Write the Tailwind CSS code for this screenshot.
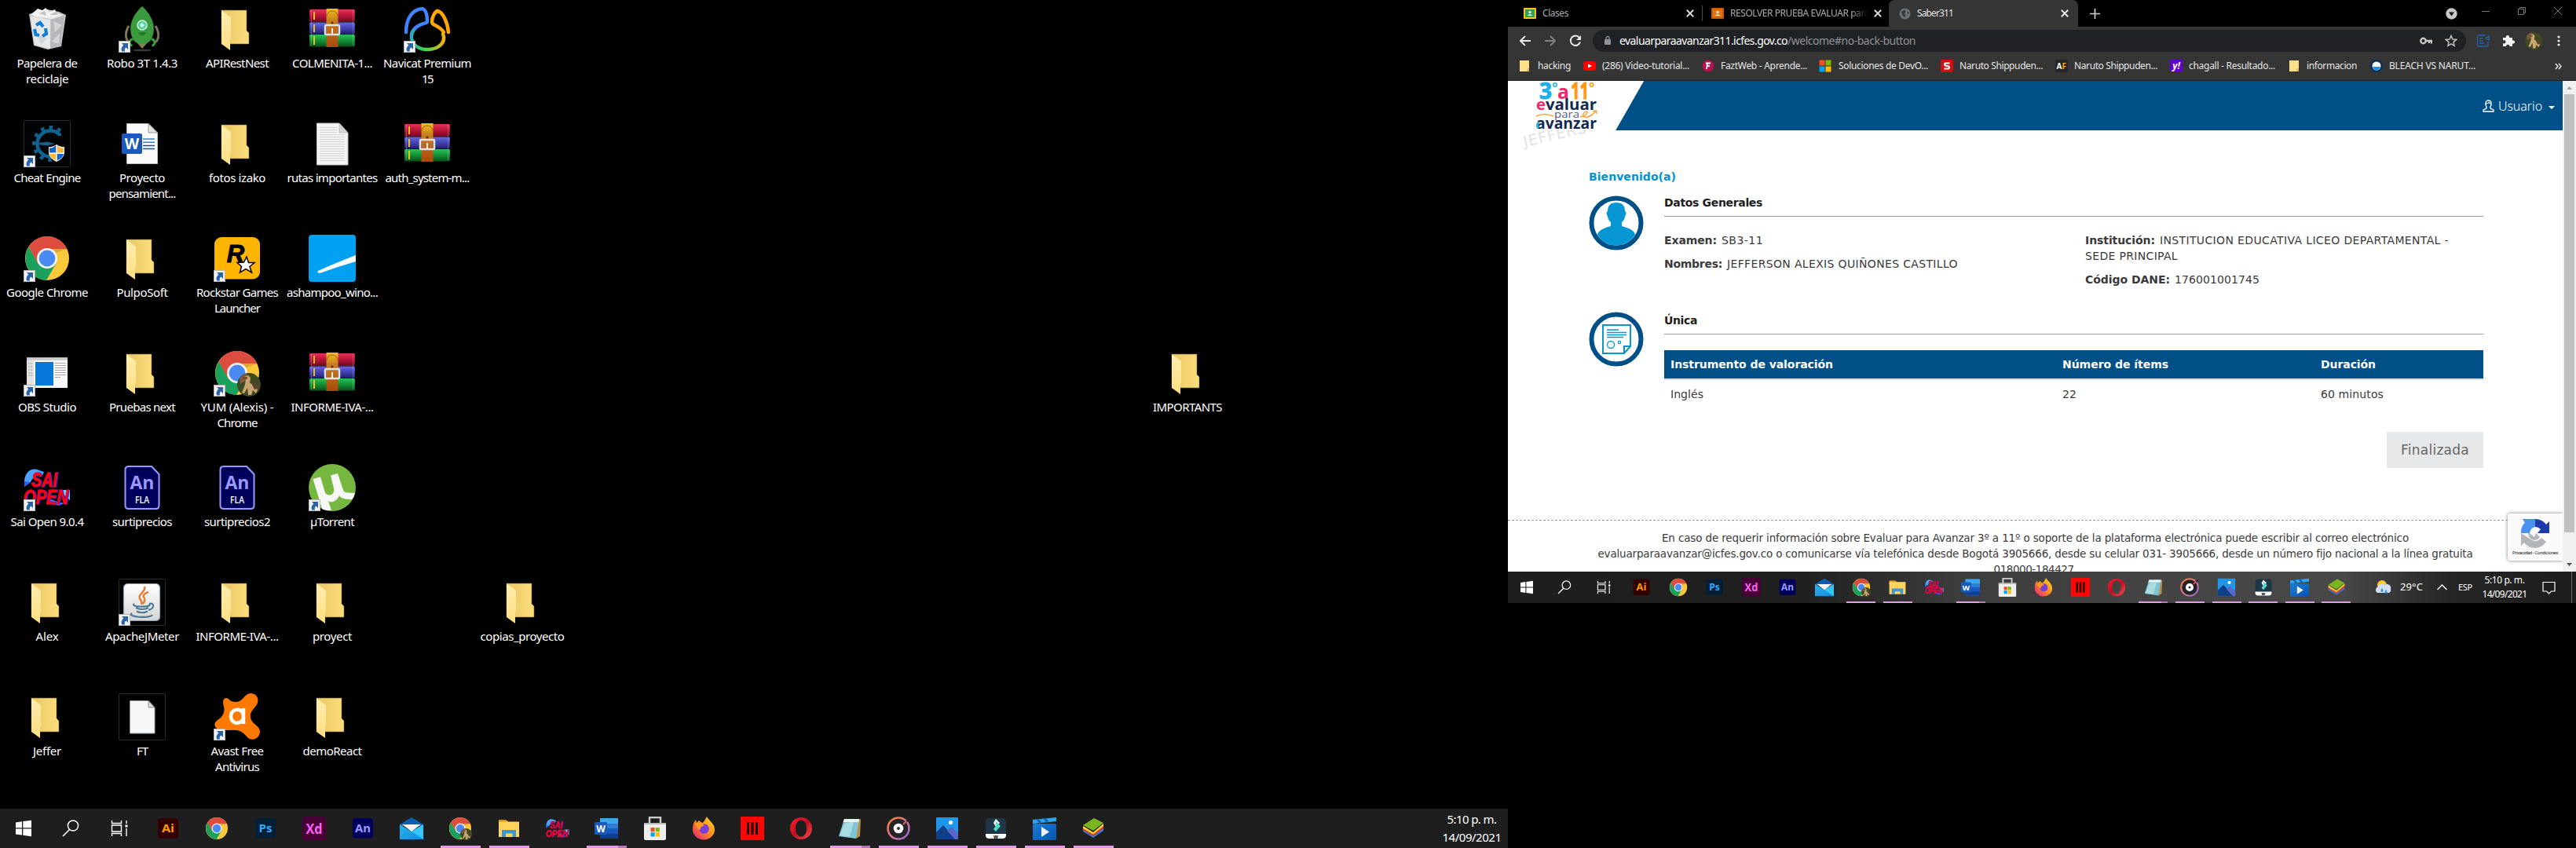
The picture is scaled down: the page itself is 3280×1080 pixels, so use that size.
<!DOCTYPE html>
<html lang="es">
<head>
<meta charset="utf-8">
<title>Escritorio</title>
<script src="https://cdn.jsdelivr.net/npm/@tailwindcss/browser@4"></script>
</head>
<body class="bg-black overflow-hidden">
<svg width="0" height="0" class="absolute">
<defs>
  <linearGradient id="gBack" x1="0" x2="1"><stop offset="0.3" stop-color="#efcd6b"/><stop offset="1" stop-color="#fddd7c"/></linearGradient>
  <linearGradient id="gFlap" x1="0" y1="0" x2="0" y2="1"><stop offset="0" stop-color="#ffeeb0"/><stop offset="1" stop-color="#ffde82"/></linearGradient>
  <linearGradient id="gR" x1="0" y1="0" x2="0" y2="1"><stop offset="0" stop-color="#e0355c"/><stop offset=".4" stop-color="#c5183f"/><stop offset="1" stop-color="#6f0a20"/></linearGradient>
  <linearGradient id="gB" x1="0" y1="0" x2="0" y2="1"><stop offset="0" stop-color="#6a6ade"/><stop offset=".4" stop-color="#4848bd"/><stop offset="1" stop-color="#20206c"/></linearGradient>
  <linearGradient id="gG" x1="0" y1="0" x2="0" y2="1"><stop offset="0" stop-color="#2bc255"/><stop offset=".4" stop-color="#159c3c"/><stop offset="1" stop-color="#07501b"/></linearGradient>
  <linearGradient id="gStrap" x1="0" y1="0" x2="0" y2="1"><stop offset="0" stop-color="#f0c020"/><stop offset=".3" stop-color="#c97f1c"/><stop offset="1" stop-color="#a84a0c"/></linearGradient>
  <linearGradient id="gNav2" x1="0" x2="1"><stop offset="0" stop-color="#2fa5c0"/><stop offset=".4" stop-color="#35d84a"/><stop offset="1" stop-color="#f5b40a"/></linearGradient>
  <linearGradient id="gJ" x1="0" y1="0" x2="0" y2="1"><stop offset="0" stop-color="#ffffff"/><stop offset="1" stop-color="#d5d5d5"/></linearGradient>
  <linearGradient id="gFx" x1="1" y1="0" x2="0" y2="1"><stop offset="0" stop-color="#ffe226"/><stop offset=".5" stop-color="#ff8a1e"/><stop offset="1" stop-color="#e31587"/></linearGradient>
  <linearGradient id="gMu" x1="0" y1="0" x2="1" y2="1"><stop offset="0" stop-color="#f58030"/><stop offset=".5" stop-color="#d9738f"/><stop offset="1" stop-color="#8a6ad8"/></linearGradient>
  <linearGradient id="gMail" x1="0" y1="0" x2="1" y2="1"><stop offset="0" stop-color="#27b5f0"/><stop offset="1" stop-color="#128ad8"/></linearGradient>
  <linearGradient id="gMov" x1="0" y1="0" x2="1" y2="1"><stop offset="0" stop-color="#1a7fd0"/><stop offset="1" stop-color="#0a50b4"/></linearGradient>
  <linearGradient id="gOp" x1="0" y1="0" x2="1" y2="1"><stop offset="0" stop-color="#ff1b2d"/><stop offset=".5" stop-color="#c0101f"/><stop offset="1" stop-color="#ff4a55"/></linearGradient>

  <symbol id="folder" viewBox="0 0 60 60">
    <path d="M10 6H42V32L45 35V49H10Z" fill="url(#gBack)" stroke="#7b6a35" stroke-width=".6"/>
    <path d="M10 6.3L22 15V42L21 43V57L10 49Z" fill="url(#gFlap)"/>
  </symbol>
  <symbol id="arrow" viewBox="0 0 60 60">
    <rect x=".5" y="45.5" width="14" height="14" fill="#f2f2f2" stroke="#b8b8b8"/>
    <path d="M4 48H12V56L9.6 53.6C7.4 55 7.4 56.5 8 58.6H4.4C2.6 55.5 4 52.5 6.4 50.4Z" fill="#2a62a8"/>
  </symbol>
  <symbol id="bin" viewBox="0 0 60 60">
    <path d="M7 11L16 8 30 5 45 8 54 12 48 52 31 56 13 51Z" fill="#c7c9cb"/>
    <path d="M10 11L18 4 24 6 28 3 33 8 40 5 42 10 50 12 36 17 14 14Z" fill="#f0f0f0"/>
    <path d="M9 14L34 18V55L14 50Z" fill="#e6e7e9"/>
    <path d="M35 18L52 14 47 51 34 55Z" fill="#b5b7ba"/>
    <path d="M38 20L49 25 40 34ZM46 35L36 46 45 49ZM18 36L30 42 22 50Z" fill="#d3d5d7"/>
    <path d="M20 10L27 7 29 13ZM33 12L41 8 44 12Z" fill="#bfc2c5"/>
    <g fill="none" stroke="#0f7fd6" stroke-width="4.2"><path d="M16 25L21 22 25 27"/><path d="M14 30L15.500 37 20 38"/><path d="M28 29L29 36 24 39"/></g>
  </symbol>
  <symbol id="robo" viewBox="0 0 60 60">
    <path d="M13 26C7 36 9 46 15 47M47 26C53 36 51 46 45 47" fill="none" stroke="#7d7654" stroke-width="3"/>
    <path d="M24 48H36L30 55Z" fill="#8a7a55"/>
    <path d="M30 1C42 12 50 28 41 44Q38 49 30 49Q22 49 19 44C10 28 18 12 30 1Z" fill="#3c9a3e"/>
    <circle cx="30" cy="25" r="6" fill="#59d0a0" stroke="#c9f2dc" stroke-width="1.600"/><circle cx="30" cy="25" r="2.500" fill="#c8ffe8"/>
    <path d="M25 34H35L33 38H27Z" fill="#1d7a28"/>
    <path d="M18.500 43a4 4 0 1 0-1 8M41.500 43a4 4 0 1 1 1 8" fill="none" stroke="#35a03c" stroke-width="3"/>
    <ellipse cx="30" cy="57" rx="12" ry="1.300" fill="#3a3a3a"/>
  </symbol>
  <symbol id="rar" viewBox="0 0 60 60">
    <rect x="1" y="5" width="58" height="16" rx="1.500" fill="url(#gR)"/><rect x="1" y="21.500" width="58" height="15" rx="1.500" fill="url(#gB)"/><rect x="1" y="37" width="58" height="15.500" rx="1.500" fill="url(#gG)"/>
    <g stroke="#f2c117" stroke-width="2"><path d="M7 8V18M7 24V34M7 39V50"/></g>
    <path d="M3.500 6V51M56.500 6V51" stroke="#fff" stroke-opacity=".22"/>
    <rect x="22.500" y="4" width="15" height="49" fill="url(#gStrap)"/>
    <path d="M23 14a7 7 0 0 1 14 0" fill="none" stroke="#8a5510" stroke-width=".8"/>
    <circle cx="30" cy="22" r="1.500" fill="#5b2a05"/>
    <rect x="21" y="25" width="18" height="12" rx="1.500" fill="none" stroke="#e2e2e6" stroke-width="2.500"/>
    <path d="M30 29V37" stroke="#eee" stroke-width="2"/>
  </symbol>
  <symbol id="navicat" viewBox="0 0 60 60">
    <g fill="none" stroke-width="4.500" stroke-linecap="round">
      <path d="M3 34C3 18 10 5 24 4C29 6 30 13 30 21C28 24 16 22 10 36" stroke="#3f84ff"/>
      <path d="M57 34C56 22 50 8 43 7C40 8 36 14 36 21C36 26 44 24 51 34" stroke="#ffa800" stroke-linejoin="round"/>
      <path d="M12 32C6 44 14 56 30 56C46 56 54 46 50 36" stroke="url(#gNav2)"/></g>
  </symbol>
  <symbol id="cheat" viewBox="0 0 60 60">
    <rect x=".5" y=".5" width="59" height="59" rx="1" fill="#020304" stroke="#2b2b2b"/>
    <circle cx="34" cy="30" r="16.500" fill="none" stroke="#10628f" stroke-width="4.500"/>
    <circle cx="34" cy="30" r="20.500" fill="none" stroke="#10628f" stroke-width="5" stroke-dasharray="4.500 6.233" stroke-dashoffset="2"/>
    <path d="M42 20H59V59H42Z" fill="#020304"/><path d="M48 7H59V25H48Z" fill="#020304"/>
    <path d="M10 30L30 27.500 40 30 30 32.500Z" fill="#10628f"/>
    <path d="M42 31Q47 35 52 34V42Q51 49 42 53Q33 49 32 42V34Q37 35 42 31Z" fill="#fff"/>
    <path d="M41.300 32Q37 36 33 35.500V41.500H41.300ZM42.700 43H51Q50 48.500 42.700 51.500Z" fill="#1764c8"/>
    <path d="M42.700 32Q47 36 51 35.500V41.500H42.700ZM41.300 43H33Q34 48.500 41.300 51.500Z" fill="#fcb733"/>
  </symbol>
  <symbol id="worddoc" viewBox="0 0 60 60">
    <path d="M10.500 4.500H38L49.500 16V55.500H10.500Z" fill="#fafafa" stroke="#b9b9b9"/><path d="M38 4.500V16H49.500Z" fill="#e2e2e2" stroke="#888" stroke-width=".8"/>
    <path d="M31 24H46M31 28.300H46" stroke="#2d86d8" stroke-width="1.400"/><path d="M31 32.500H46M31 36.500H46" stroke="#1c4f9c" stroke-width="1.600"/>
    <rect x="4" y="17" width="26" height="26" rx="2" fill="#185abd"/>
    <text x="17" y="37" font-family="Open Sans" font-weight="700" font-size="19" fill="#fff" text-anchor="middle">W</text>
  </symbol>
  <symbol id="txt" viewBox="0 0 60 60">
    <path d="M10.500 4H39L50 16V57H10.500Z" fill="#f4f4f4" stroke="#c6c6c6"/><path d="M39 4V16H50Z" fill="#d4d4d4" stroke="#aaa" stroke-width=".6"/>
    <path d="M14 9.500H36M14 12.500H36M14 15.500H36M14 18.500H46M14 21.500H46M14 24.500H46M14 27.500H46M14 30.500H46M14 33.500H46M14 36.500H46M14 39.500H46M14 42.500H46M14 45.500H46M14 48.500H46M14 51.500H46" stroke="#cfcfcf" stroke-width=".9"/>
  </symbol>
  <symbol id="blank" viewBox="0 0 60 60">
    <rect x=".5" y=".5" width="59" height="59" rx="1" fill="none" stroke="#2b2b2b"/>
    <path d="M14.500 9.500H38L46 18V51H14.500Z" fill="#f5f7f8" stroke="#9c9c9c"/><path d="M38 9.500V18H46Z" fill="#dcdcdc" stroke="#777" stroke-width=".8"/>
  </symbol>
  <symbol id="chrome" viewBox="0 0 60 60">
    <circle cx="30" cy="30" r="28" fill="#fdc83c"/>
    <path d="M30 2A28 28 0 0 1 55.500 18H30L18 37 6.500 15.500A28 28 0 0 1 30 2Z" fill="#dc4c3f"/>
    <path d="M6.500 15.500A28 28 0 0 0 29 58L41.500 36.500 30 42 18 36.500Z" fill="#1aa15e"/>
    <path d="M30 18H55.500L40 24Z" fill="#e3a932"/>
    <circle cx="30" cy="30" r="13" fill="#f4f4f4"/><circle cx="30" cy="30" r="10.400" fill="#4a8af4"/>
  </symbol>
  <symbol id="alpaca" viewBox="0 0 30 30">
    <circle cx="15" cy="15" r="15" fill="#3f4a22"/><path d="M3 6A15 15 0 0 1 12 .5L14 8 4 14Z" fill="#7b5b40"/>
    <path d="M9 5L14 3 17 6 16 13 23 15 26 21 24 26 20 22 18 28 14 28 13 19 9 26 6 25 10 15 11 8Z" fill="#c9a570"/>
    <path d="M18 13L26 15 28 20 22 21Z" fill="#57442f"/><path d="M7 5H13V8H8Z" fill="#7a4a2a"/>
  </symbol>
  <symbol id="chromea" viewBox="0 0 60 60"><use href="#chrome" width="60" height="60"/><use href="#alpaca" x="30" y="30" width="30" height="30"/></symbol>
  <symbol id="rockstar" viewBox="0 0 60 60">
    <rect x="1" y="3" width="58" height="53.500" rx="9" fill="#ffb400"/>
    <text x="28" y="35" font-family="Liberation Sans" font-weight="700" font-style="italic" font-size="31" fill="#000" stroke="#000" text-anchor="middle">R</text>
    <path d="M42 28L44.500 35.500 52 35.500 46 40.500 48.500 48 41 43.500 33.500 48 35.500 40.500 30 35.500 38.500 35Z" fill="#fff" stroke="#000" stroke-width="1.500"/>
  </symbol>
  <symbol id="asham" viewBox="0 0 60 60"><rect width="60" height="60" rx="4" fill="#00a1f1"/><path d="M60 26V34Q36 41 14 49Q10 48 12 46Q34 36 60 26Z" fill="#fff"/></symbol>
  <symbol id="obs" viewBox="0 0 60 60">
    <rect x="4" y="10.500" width="52" height="38.500" fill="#f7f7f7"/><rect x="4" y="10.500" width="52" height="3.500" fill="#cfcfcf"/><rect x="4" y="14" width="9" height="35" fill="#e3e3e3"/>
    <path d="M6 18H11M6 22H11M6 26H11M6 30H11M6 33H11" stroke="#999" stroke-dasharray="2 1"/>
    <rect x="15" y="16" width="23" height="30" fill="#0878d8"/>
    <path d="M39.500 17.500H54M39.500 20.500H54M39.500 23.500H54M39.500 26.500H54M39.500 29.500H54M39.500 32.500H54M39.500 35.500H47" stroke="#a9a9a9" stroke-width="1.100"/>
  </symbol>
  <symbol id="sai" viewBox="0 0 60 60">
    <path d="M1 22C2 8 12 4 20 8L26 10 24 15C16 13 12 16 9 23L1 29Z" fill="#4aa4ff"/><path d="M1 22V29L9 23Z" fill="#2b5bff"/>
    <path d="M48 33H59V46L52 40Z" fill="#6fd4ff"/><path d="M33 44L44 48 52 50 45 53 33 50Z" fill="#3a70ff"/>
    <g font-family="Liberation Sans" font-weight="700" font-style="italic" fill="#ff0012" class="[filter:drop-shadow(1px_0_0_#2430ff)]">
      <text x="10" y="29" font-size="25" textLength="33" lengthAdjust="spacingAndGlyphs" stroke="#ff0012" stroke-width=".8">SAI</text>
      <text x="0" y="51" font-size="25" textLength="57" lengthAdjust="spacingAndGlyphs" stroke="#ff0012" stroke-width=".8">OPEN</text></g>
  </symbol>
  <symbol id="anfla" viewBox="0 0 60 60">
    <path d="M12 3H42L51.500 13V53Q51.500 57 47 57H13Q8.500 57 8.500 53V7Q8.500 3 13 3Z" fill="#00005b" stroke="#9999ff" stroke-width="2"/>
    <text x="30" y="32" font-family="Open Sans" font-weight="700" font-size="23" textLength="31" lengthAdjust="spacingAndGlyphs" fill="#9999ff" text-anchor="middle">An</text>
    <text x="30" y="50" font-family="Open Sans" font-weight="600" font-size="12" textLength="18" lengthAdjust="spacingAndGlyphs" fill="#fff" text-anchor="middle">FLA</text>
  </symbol>
  <symbol id="utor" viewBox="0 0 60 60"><circle cx="30" cy="30" r="30" fill="#76b83f"/>
    <path d="M5.500 19L15 16.500 20.500 35C22 42 34 41 32 31L28 14.500 37 12 44 33C45.500 38 52 36 59 37Q58 42 55 45C47 45 41 44 39 40C36 48 28 50 25 47L29 59Q21 59.500 17 57Z" fill="#f7f7f7"/></symbol>
  <symbol id="java" viewBox="0 0 60 60">
    <rect x=".5" y=".5" width="59" height="59" rx="1" fill="none" stroke="#2b2b2b"/>
    <rect x="6.500" y="6.500" width="46" height="47" rx="5" fill="url(#gJ)" stroke="#8fa3b5" stroke-width="1.200"/>
    <path d="M33 10C36 17 22 20 28 27C30 30 30 31 29 33M38 17C32 19 30 22 33 25C34 28 33 30 31 32" fill="none" stroke="#e8762b" stroke-width="2.300"/>
    <path d="M20 32C14 36 38 37 40 33M22 37Q30 41 38 37M23 41.500Q30 45 37 41.500M17 44C10 49 40 51 43 46M39 32C46 30 46 38 38 40" fill="none" stroke="#4d7896" stroke-width="2.200"/>
  </symbol>
  <symbol id="avast" viewBox="0 0 60 60">
    <path d="M16 6C20 6 20 11 28 11C38 11 38 1 47 0C56 0 59 9 54 16C48 23 45 26 48 34C51 40 59 42 59 49C58 59 48 61 43 56C37 49 33 46 20 47H8C0 44 0 38 4 35C10 31 15 26 13 17C11 11 12 6 16 6Z" fill="#ff7800"/>
    <path d="M38 19V39M38 29A8 8.500 0 1 0 38 29.500" fill="none" stroke="#fff" stroke-width="4.500"/>
  </symbol>

  <symbol id="t-win" viewBox="0 0 30 30"><path d="M5 7.500L13 6.300V14.300H5ZM14.300 6.100L25 4.800V14.300H14.300ZM5 15.500H13V23.600L5 22.500ZM14.300 15.500H25V25.200L14.300 23.800Z" fill="#fff"/></symbol>
  <symbol id="t-search" viewBox="0 0 30 30"><circle cx="18" cy="11.500" r="6.600" fill="none" stroke="#fff" stroke-width="1.500"/><path d="M13.500 16.500L5 25" stroke="#fff" stroke-width="1.600"/></symbol>
  <symbol id="t-view" viewBox="0 0 30 30"><path d="M5.500 5V8.500H17.500V5M5.500 25V21.500H17.500V25M5.500 11H17.500V19H5.500ZM24 5V9M24 15V25" fill="none" stroke="#fff" stroke-width="1.400"/><rect x="22.500" y="10.500" width="3" height="3" fill="#fff"/></symbol>
  <symbol id="t-ai" viewBox="0 0 30 30"><rect x="2" y="2" width="26" height="25.500" rx="4" fill="#330000"/><text x="15" y="19.500" font-family="Open Sans" font-weight="700" font-size="14.500" textLength="16" lengthAdjust="spacingAndGlyphs" fill="#ff9a00" text-anchor="middle">Ai</text></symbol>
  <symbol id="t-ps" viewBox="0 0 30 30"><rect x="2" y="2" width="26" height="25.500" rx="4" fill="#001e36"/><text x="15" y="19.500" font-family="Open Sans" font-weight="700" font-size="14.500" textLength="17" lengthAdjust="spacingAndGlyphs" fill="#31a8ff" text-anchor="middle">Ps</text></symbol>
  <symbol id="t-xd" viewBox="0 0 30 30"><rect x="0" y="0" width="30" height="30" rx="4" fill="#470137"/><text x="15" y="21.500" font-family="Open Sans" font-weight="700" font-size="17.500" textLength="21" lengthAdjust="spacingAndGlyphs" fill="#ff61f6" text-anchor="middle">Xd</text></symbol>
  <symbol id="t-an" viewBox="0 0 30 30"><rect x="2" y="2" width="26" height="25.500" rx="4" fill="#00005b"/><text x="15" y="19.500" font-family="Open Sans" font-weight="700" font-size="14.500" textLength="20" lengthAdjust="spacingAndGlyphs" fill="#9999ff" text-anchor="middle">An</text></symbol>
  <symbol id="t-mail" viewBox="0 0 30 30"><path d="M0 10L15 1 30 10V12H0Z" fill="#0a5fb4"/><path d="M0 10L15 19 30 10V29H0Z" fill="url(#gMail)"/><path d="M15 19L30 10V29Z" fill="#36c5f5"/><path d="M3 10H27L15 19Z" fill="#f3f3f3"/></symbol>
  <symbol id="t-exp" viewBox="0 0 30 30"><path d="M2 4H11L14 6V10H2Z" fill="#d99a10"/><rect x="2" y="6.500" width="26" height="19.500" fill="#ffd45c"/><path d="M6 26V17H24V26H19.500V21.500H11V26Z" fill="#3e96d8"/></symbol>
  <symbol id="t-word" viewBox="0 0 30 30"><rect x="7" y="2" width="23" height="26" rx="1.500" fill="#2b7cd3"/><rect x="7" y="2" width="23" height="7" fill="#41a5ee"/><rect x="7" y="15" width="23" height="6.500" fill="#185abd"/><rect x="7" y="21.500" width="23" height="6.500" fill="#103f91"/><rect x="0" y="7" width="16" height="16" rx="1.500" fill="#185abd"/><text x="8" y="19.500" font-family="Open Sans" font-weight="700" font-size="12" fill="#fff" text-anchor="middle">W</text></symbol>
  <symbol id="t-store" viewBox="0 0 30 30"><path d="M8 9V1H22V9" fill="none" stroke="#cfcfcf" stroke-width="2.400"/><path d="M1 8H29V28Q29 30 27 30H3Q1 30 1 28Z" fill="#efefef"/><path d="M1 8H29V10H1Z" fill="#b9b9b9"/><rect x="9.500" y="14" width="5.200" height="5.200" fill="#f25022"/><rect x="15.700" y="14" width="5.200" height="5.200" fill="#7fba00"/><rect x="9.500" y="20.200" width="5.200" height="5.200" fill="#00a4ef"/><rect x="15.700" y="20.200" width="5.200" height="5.200" fill="#ffb900"/></symbol>
  <symbol id="t-fox" viewBox="0 0 30 30"><path d="M19 0C20 4 29 8 29 17A14 13 0 0 1 1 16C1 11 2 7 5 4L6 8 9 5 13 8C16 7 17 3 19 0Z" fill="url(#gFx)"/><circle cx="15.500" cy="15.500" r="6.300" fill="#7a3fd8"/><path d="M4 9C10 7 14 9 16 12C12 12 10 14 11 17C8 16 5 13 4 9Z" fill="#ff9a22"/></symbol>
  <symbol id="t-red" viewBox="0 0 30 30"><rect width="30" height="30" fill="#ff0505"/><path d="M9.500 7V23M15 7V23M20.500 7V23" stroke="#1c0000" stroke-width="3"/></symbol>
  <symbol id="t-opera" viewBox="0 0 30 30"><path fill-rule="evenodd" d="M15 1A14 14 0 0 1 15 29A14 14 0 0 1 15 1ZM15 4.500C5.500 5 5.500 25 15 25.500C24.500 25 24.500 5 15 4.500Z" fill="url(#gOp)"/></symbol>
  <symbol id="t-note" viewBox="0 0 30 30"><path d="M23 5L29 3 28 25 23 28Z" fill="#b78d50"/><path d="M8 3L27 3 23 28 1 25Z" fill="#7fc4d0"/><path d="M8 3L27 3 26.300 7 6.500 7Z" fill="#e9f4f5"/><path d="M9 8L20 7 15 26 2 24Z" fill="#a9dde4"/></symbol>
  <symbol id="t-music" viewBox="0 0 30 30"><circle cx="15" cy="15" r="13.500" fill="#262326" stroke="url(#gMu)" stroke-width="2.600"/><circle cx="15" cy="15" r="6.300" fill="#fff"/><circle cx="15" cy="15" r="2" fill="#333"/><path d="M22 10L28 3" stroke="#262326" stroke-width="2"/><path d="M21 10L25 6" stroke="#e0606a" stroke-width="2"/></symbol>
  <symbol id="t-photo" viewBox="0 0 30 30"><rect x="1" y="1" width="28" height="28" rx="1" fill="#2196e8"/><path d="M1 20L10 11 26 29H1Z" fill="#0f3f86"/><path d="M15 18L20 13 29 21V29H25Z" fill="#5a67c8"/><circle cx="19.500" cy="7.500" r="2.600" fill="#fff"/></symbol>
  <symbol id="t-film" viewBox="0 0 30 30"><rect x="2" y="2" width="26" height="26" rx="5" fill="#1d3748"/><path d="M15 3L20 8 15 13 12 8Z" fill="#fff"/><path d="M15 6L21 12 15 19 12 16 15 12Z" fill="#4fdcc2"/><path d="M2 22H28V24Q28 28 23 28H7Q2 28 2 24Z" fill="#fff"/><text x="15" y="27.600" font-family="Open Sans" font-weight="700" font-size="7" text-anchor="middle">w</text></symbol>
  <symbol id="t-mov" viewBox="0 0 30 30"><path d="M0 4L30 1V6L0 9Z" fill="#2aa8ee"/><path d="M6 3.500L10 8M15 2.600L19 7" stroke="#0d63b8" stroke-width="3"/><rect y="9" width="30" height="21" rx="1.500" fill="url(#gMov)"/><path d="M11 13L21 19.500 11 26Z" fill="#f2f2f2"/></symbol>
  <symbol id="t-blue" viewBox="0 0 30 30"><path d="M2 16L15 24 28 14V18L15 27 2 19Z" fill="#2a7de0"/><path d="M2 14L15 22 28 11V15L15 25 2 17Z" fill="#e13a2a"/><path d="M2 12L15 20 28 9V12L15 22.500 2 15Z" fill="#ffd83a"/><path d="M2 11L16 2 28 8 15 18Z" fill="#7ab51d"/></symbol>

  <symbol id="x" viewBox="0 0 10 10"><path d="M1.500 1.500L8.500 8.500M8.500 1.500L1.500 8.500" stroke="currentColor" stroke-width="1.700"/></symbol>
  <symbol id="bfolder" viewBox="0 0 16 16"><path d="M2 1H14V15H2Z" fill="#ffe08a"/><path d="M12 11H14V15H11Z" fill="#e0b84d"/></symbol>
  <symbol id="classroom" viewBox="0 0 16 16"><rect x="0" y="1" width="16" height="14" rx="1" fill="var(--b)"/><rect x="2" y="3" width="12" height="10" fill="var(--a)"/><circle cx="8" cy="6.500" r="1.600" fill="#fff"/><path d="M4.500 11Q8 7.500 11.500 11Z" fill="#fff"/></symbol>
</defs>
</svg>

<div class="relative w-[3280px] h-[1080px] bg-black font-['Noto_Sans',sans-serif] flex items-start">

  <!-- primary monitor -->
  <section class="relative w-[1920px] h-[1080px] shrink-0 flex flex-col justify-end">
    <div id="desktop" class="absolute inset-0 text-white text-[15px] leading-[20px]"></div>
    <div class="relative h-[50px] bg-[#1e1e1e] flex items-center">
      <div class="flex items-center">
        <div class="w-[60px] flex justify-center"><svg class="w-[30px] h-[30px]"><use href="#t-win"/></svg></div>
        <div class="w-[60px] flex justify-center"><svg class="w-[30px] h-[30px]"><use href="#t-search"/></svg></div>
        <div class="w-[63px] flex justify-center"><svg class="w-[30px] h-[30px]"><use href="#t-view"/></svg></div>
      </div>
      <div id="bar1" class="flex h-full"></div>
      <div class="ml-auto w-[92px] flex flex-col items-center text-white text-[15px] leading-[23px]">
        <span data-w="63">5:10 p. m.</span><span data-w="75">14/09/2021</span>
      </div>
    </div>
  </section>

  <!-- secondary monitor -->
  <section class="w-[1360px] h-[768px] shrink-0 flex flex-col bg-white">
    <!-- tab strip -->
    <div class="h-[34px] bg-black flex items-center text-[12px] text-[#a9abae] shrink-0 relative">
      <svg class="ml-[20px] w-[16px] h-[16px] [--a:#2f9e57] [--b:#f7c51e]"><use href="#classroom"/></svg>
      <span class="ml-2 w-[182px]"><span data-w="33">Clases</span></span>
      <svg class="w-[12px] h-[12px] text-[#d5d5d5]"><use href="#x"/></svg>
      <div class="ml-[9px] w-px h-[20px] bg-[#4a4a4a]"></div>
      <svg class="ml-[11px] w-[16px] h-[16px] [--a:#e8710a] [--b:#c75a08]"><use href="#classroom"/></svg>
      <span class="ml-2 w-[176px] overflow-hidden whitespace-nowrap [mask-image:linear-gradient(90deg,#000_88%,transparent)]"><span data-w="177">RESOLVER PRUEBA EVALUAR para</span></span>
      <svg class="ml-[6px] w-[12px] h-[12px] text-[#d5d5d5]"><use href="#x"/></svg>
      <div class="ml-[8px] w-[241px] h-full bg-[#353535] rounded-t-[7px] flex items-center text-[#e3e3e3]">
        <svg class="ml-[13px] w-[15px] h-[15px]" viewBox="0 0 16 16"><circle cx="8" cy="8" r="7.500" fill="#6b6e72"/><path d="M3 5L8 3 9 6 6 8 9 9 8 13 5 10ZM11 5L14 7 12 9Z" fill="#353535"/></svg>
        <span class="ml-[8px] w-[182px]"><span data-w="46">Saber311</span></span>
        <svg class="w-[12px] h-[12px]"><use href="#x"/></svg>
      </div>
      <svg class="ml-[15px] w-[13px] h-[13px]" viewBox="0 0 13 13"><path d="M6.500 0V13M0 6.500H13" stroke="#cfcfcf" stroke-width="1.700"/></svg>
      <svg class="ml-auto w-[15px] h-[15px]" viewBox="0 0 15 15"><circle cx="7.500" cy="7.500" r="7.200" fill="#c9c9c9"/><path d="M4 5.500H11L7.500 10.500Z" fill="#111"/></svg>
      <svg class="ml-[31px] mb-1.5 w-[10px] h-[10px]" viewBox="0 0 10 10"><path d="M0 5.500H10" stroke="#777"/></svg>
      <svg class="ml-[36px] mb-1.5 w-[10px] h-[10px]" viewBox="0 0 10 10"><path d="M.5 2.500H7.500V9.500H.5ZM2.500 2.500V.5H9.500V7.500H7.500" fill="none" stroke="#777"/></svg>
      <svg class="ml-[36px] mb-1.5 mr-[18px] w-[10px] h-[10px]" viewBox="0 0 10 10"><path d="M0 0L10 10M10 0L0 10" stroke="#777"/></svg>
    </div>
    <!-- toolbar -->
    <div class="h-[35px] bg-[#353535] flex items-center shrink-0">
      <svg class="ml-[14px] w-[16px] h-[16px]" viewBox="0 0 16 16"><path d="M15 8H2M8 2L2 8L8 14" fill="none" stroke="#e8e8e8" stroke-width="1.900"/></svg>
      <svg class="ml-[16px] w-[16px] h-[16px]" viewBox="0 0 16 16"><path d="M1 8H14M8 2L14 8L8 14" fill="none" stroke="#808080" stroke-width="1.800"/></svg>
      <svg class="ml-[16px] w-[16px] h-[16px]" viewBox="0 0 16 16"><path d="M13 4A6.200 6.200 0 1 0 14 9.500" fill="none" stroke="#e8e8e8" stroke-width="2"/><path d="M15 1V7H9Z" fill="#e8e8e8"/></svg>
      <div class="ml-[14px] w-[1112px] h-[28px] rounded-full bg-[#202124] flex items-center text-[14px] text-white">
        <svg class="ml-[14px] w-[10px] h-[14px]" viewBox="0 0 10 14"><rect x="1" y="5" width="8" height="7" rx="1" fill="#8f9398"/><path d="M3 5V3.500a2 2 0 0 1 4 0V5" fill="none" stroke="#8f9398" stroke-width="1.300"/></svg>
        <span class="ml-[10px]" data-w="214">evaluarparaavanzar311.icfes.gov.co</span><span class="text-[#919499]" data-w="163">/welcome#no-back-button</span>
        <svg class="ml-auto w-[16px] h-[10px]" viewBox="0 0 16 10"><circle cx="4.500" cy="5" r="3.200" fill="none" stroke="#c8c8c8" stroke-width="2.400"/><path d="M8 5H15V8.500M12 5V8" stroke="#c8c8c8" stroke-width="2.300" fill="none"/></svg>
        <svg class="ml-[16px] mr-[11px] w-[16px] h-[16px]" viewBox="0 0 16 16"><path d="M8 1.500L9.900 6 14.700 6.400 11 9.600 12.100 14.300 8 11.800 3.900 14.300 5 9.600 1.300 6.400 6.100 6Z" fill="none" stroke="#c8c8c8" stroke-width="1.400"/></svg>
      </div>
      <svg class="ml-[13px] w-[17px] h-[16px]" viewBox="0 0 17 16"><path d="M15 9V13.500Q15 15 13.500 15H3Q1.500 15 1.500 13.500V2.500Q1.500 1 3 1H11M4 5H8M4 8H9M4 11H10M16 2V7L12 4.500Z" fill="none" stroke="#1f66ad" stroke-width="1.300"/></svg>
      <svg class="ml-[16px] w-[16px] h-[16px]" viewBox="0 0 16 16"><path d="M1 4H5A2.200 2.200 0 1 1 9 4H13V7.500A2.200 2.200 0 1 1 13 11.500V15H9.500A2.200 2.200 0 1 0 5 15H1V11A2.200 2.200 0 1 0 1 7.500Z" fill="#f2f2f2"/></svg>
      <svg class="ml-[13px] w-[22px] h-[22px]"><use href="#alpaca"/></svg>
      <svg class="ml-[19px] w-[4px] h-[14px]" viewBox="0 0 4 14"><g fill="#e8e8e8"><circle cx="2" cy="2" r="1.600"/><circle cx="2" cy="7" r="1.600"/><circle cx="2" cy="12" r="1.600"/></g></svg>
    </div>
    <!-- bookmarks -->
    <div class="h-[34px] bg-[#353535] border-b border-[#202020] flex items-center text-[12px] text-[#e6e6e6] shrink-0 pb-[3px]">
      <div class="w-[90px] flex items-center"><svg class="ml-[13px] w-[16px] h-[16px]"><use href="#bfolder"/></svg><span class="ml-[9px]" data-w="42">hacking</span></div>
      <div class="w-[151px] flex items-center"><svg class="ml-[6px] w-[16px] h-[16px]" viewBox="0 0 16 16"><rect y="2" width="16" height="12" rx="3" fill="#f00"/><path d="M6 5.500L11 8 6 10.500Z" fill="#fff"/></svg><span class="ml-[8px]" data-w="111">(286) Video-tutorial...</span></div>
      <div class="w-[149px] flex items-center"><svg class="ml-[6px] w-[16px] h-[16px]" viewBox="0 0 16 16"><circle cx="8" cy="8" r="7.500" fill="#b5124f"/><path d="M5 4.500H11M7 8H10M7 4.500L6 12" stroke="#fff" stroke-width="1.800"/></svg><span class="ml-[8px]" data-w="110">FaztWeb - Aprende...</span></div>
      <div class="w-[155px] flex items-center"><svg class="ml-[6px] w-[16px] h-[16px]" viewBox="0 0 16 16"><rect x=".5" y=".5" width="7" height="7" fill="#f25022"/><rect x="8.500" y=".5" width="7" height="7" fill="#7fba00"/><rect x=".5" y="8.500" width="7" height="7" fill="#00a4ef"/><rect x="8.500" y="8.500" width="7" height="7" fill="#ffb900"/></svg><span class="ml-[9px]" data-w="114">Soluciones de DevO...</span></div>
      <div class="w-[146px] flex items-center"><svg class="ml-[6px] w-[16px] h-[16px]" viewBox="0 0 16 16"><rect width="16" height="16" rx="2" fill="#d01010"/><path d="M11.500 4.500H6Q4 6 6 7.500L10 8.500Q12 10 10 11.500H4.500" fill="none" stroke="#fff" stroke-width="2.200"/></svg><span class="ml-[8px]" data-w="106">Naruto Shippuden...</span></div>
      <div class="w-[146px] flex items-center"><svg class="ml-[6px] w-[16px] h-[16px]" viewBox="0 0 16 16"><rect width="16" height="16" rx="3" fill="#262626"/><text x="1.500" y="12" font-family="Open Sans" font-weight="700" font-size="10" fill="#fff">A</text><text x="8.500" y="12" font-family="Open Sans" font-weight="700" font-size="10" fill="#ffa31a">F</text></svg><span class="ml-[8px]" data-w="106">Naruto Shippuden...</span></div>
      <div class="w-[150px] flex items-center"><svg class="ml-[6px] w-[16px] h-[16px]" viewBox="0 0 16 16"><rect width="16" height="16" fill="#6001d2"/><text x="8" y="12" font-family="Open Sans" font-weight="700" font-style="italic" font-size="12" fill="#fff" text-anchor="middle">y!</text></svg><span class="ml-[8px]" data-w="110">chagall - Resultado...</span></div>
      <div class="w-[104px] flex items-center"><svg class="ml-[6px] w-[16px] h-[16px]"><use href="#bfolder"/></svg><span class="ml-[8px]" data-w="64">informacion</span></div>
      <div class="flex items-center"><svg class="ml-[7px] w-[16px] h-[16px]" viewBox="0 0 16 16"><circle cx="8" cy="8" r="8" fill="#0b2f5c"/><circle cx="8" cy="8" r="5.500" fill="#fff"/><path d="M3 9H13Q12 13 8 13.500Q4 13 3 9Z" fill="#1a8fe8"/></svg><span class="ml-[8px]" data-w="110">BLEACH VS NARUT...</span></div>
      <svg class="ml-auto mr-[18px] w-[9px] h-[9px]" viewBox="0 0 9 9"><path d="M1 1L4 4.500 1 8M5 1L8 4.500 5 8" fill="none" stroke="#e6e6e6" stroke-width="1.500"/></svg>
    </div>
    <!-- page -->
    <div class="h-[625px] flex shrink-0 overflow-hidden">
      <main class="relative w-[1343px] h-[625px] overflow-hidden font-['DejaVu_Sans',sans-serif] text-[14px] leading-[20px] text-[#3a3a3a]">
        <div class="absolute left-[22px] top-[67px] text-[19px] text-[#e2e2e2] origin-bottom-left -rotate-[13deg]" data-w="113">JEFFERSON</div>
        <header class="relative h-[63px]">
          <svg class="w-[1343px] h-[63px]" viewBox="0 0 1343 63">
            <path d="M173 0H1343V63H137Z" fill="#005088"/><path d="M0 0H173L137 63H0Z" fill="#fff"/>
            <g font-family="Open Sans" font-weight="700">
              <text x="40" y="22.500" font-size="28" textLength="16" lengthAdjust="spacingAndGlyphs" fill="#1fb0ea" stroke="#1fb0ea">3</text>
              <text x="63" y="22.500" font-size="25" textLength="15" lengthAdjust="spacingAndGlyphs" fill="#f4286a">a</text>
              <text x="80" y="22.500" font-size="28" textLength="23" lengthAdjust="spacingAndGlyphs" fill="#ff9a10" stroke="#ff9a10">11</text>
              <text x="36" y="37" font-size="20" textLength="77" lengthAdjust="spacingAndGlyphs" fill="#12294f"><tspan fill="#f4286a">e</tspan>valuar</text>
              <text x="36" y="60.500" font-size="19" textLength="77" lengthAdjust="spacingAndGlyphs" fill="#12294f">avanzar</text>
              <text x="59" y="47" font-size="13" font-weight="400" textLength="32" lengthAdjust="spacingAndGlyphs" fill="#51607c">para</text>
            </g>
            <circle cx="60" cy="5" r="2.200" fill="none" stroke="#1fb0ea" stroke-width="1.500"/><circle cx="106.500" cy="5" r="2.200" fill="none" stroke="#ff9a10" stroke-width="1.500"/>
            <path d="M39 53A5 5 0 0 0 39 60" fill="none" stroke="#1fb0ea" stroke-width="3"/>
            <path d="M36 45Q46 40 58 45M92 46C100 45 104 38 99 39C93 43 96 47 101 46Q108 44 112 38M108 38.500L112.500 38 113 42" fill="none" stroke="#ffa030" stroke-width="1.400"/>
          </svg>
          <div class="absolute right-[10px] top-[20px] flex items-center text-white font-['Noto_Sans',sans-serif] text-[16px] leading-[24px]">
            <svg class="w-[15px] h-[16px]" viewBox="0 0 15 16"><path d="M1 15V13L5 11V9Q3.500 7 4 4Q4.500 1 7.500 1Q10.500 1 11 4Q11.500 7 10 9V11L14 13V15ZM4 5Q7 5 8 3.500 9 5 11 5" fill="none" stroke="#fff" stroke-width="1.300"/></svg>
            <span class="ml-[5px] font-light" data-w="56">Usuario</span>
            <svg class="ml-[8px] mt-1 w-[8px] h-[4px]" viewBox="0 0 8 4"><path d="M0 0H8L4 4Z" fill="#fff"/></svg>
          </div>
        </header>
        <div class="pl-[103px] pr-[101px] pt-[49px]">
          <h1 class="h-[20px] font-bold text-[#0093d0]"><span data-w="111">Bienvenido(a)</span></h1>
          <section class="mt-[13px] h-[149px] flex">
            <svg class="w-[70px] h-[70px] shrink-0 mt-px" viewBox="0 0 70 70"><circle cx="35" cy="35" r="31.500" fill="#fff" stroke="#005088" stroke-width="6"/><path d="M35 9Q46 9 46 20Q49 21 46 27Q45 32 42 34V39Q58 43 59 50A28 28 0 0 1 11 50Q12 43 28 39V34Q25 32 24 27Q21 21 24 20Q24 9 35 9Z" fill="#0596d3"/></svg>
            <div class="ml-[26px] flex-1">
              <h2 class="h-[28px] border-b border-[#999] font-bold text-[#1d1d1d]"><span data-w="125">Datos Generales</span></h2>
              <div class="flex pt-[20px]">
                <div class="w-[536px] flex flex-col gap-[10px]">
                  <p class="h-[20px] flex gap-[6px]"><b data-w="67">Examen:</b><span data-w="53">SB3-11</span></p>
                  <p class="h-[20px] flex gap-[6px]"><b data-w="74">Nombres:</b><span data-w="294">JEFFERSON ALEXIS QUIÑONES CASTILLO</span></p>
                </div>
                <div class="flex flex-col">
                  <p class="h-[20px] flex gap-[6px]"><b data-w="89">Institución:</b><span data-w="368">INSTITUCION EDUCATIVA LICEO DEPARTAMENTAL -</span></p>
                  <p class="h-[20px]"><span data-w="118">SEDE PRINCIPAL</span></p>
                  <p class="mt-[10px] h-[20px] flex gap-[6px]"><b data-w="108">Código DANE:</b><span data-w="108">176001001745</span></p>
                </div>
              </div>
            </div>
          </section>
          <section class="flex">
            <svg class="w-[70px] h-[70px] shrink-0" viewBox="0 0 70 70"><circle cx="35" cy="35" r="31.500" fill="#fff" stroke="#005088" stroke-width="6"/><path d="M18 17H53V44L45 53H18Z" fill="#fff" stroke="#0596d3" stroke-width="2"/><path d="M53 44H45V53" fill="none" stroke="#0596d3" stroke-width="2"/><path d="M23 23H38M23 26.500H48M23 29.500H48M23 32.500H44" stroke="#0596d3" stroke-width="1.500"/><circle cx="28" cy="42" r="4.500" fill="none" stroke="#0596d3" stroke-width="1.300"/><circle cx="39" cy="39" r="1.700" fill="none" stroke="#0596d3" stroke-width="1.200"/></svg>
            <div class="ml-[26px] flex-1 flex flex-col">
              <h2 class="h-[29px] pt-px border-b border-[#999] font-bold text-[#1d1d1d]"><span data-w="42">Única</span></h2>
              <div class="mt-[20px] h-[38px] bg-[#005088] border-b-2 border-[#ddd] text-white font-bold grid grid-cols-[499px_329px_1fr] items-center pl-[8px]">
                <span><span data-w="207">Instrumento de valoración</span></span><span><span data-w="135">Número de ítems</span></span><span><span data-w="70">Duración</span></span>
              </div>
              <div class="h-[36px] grid grid-cols-[499px_329px_1fr] items-center pl-[8px]">
                <span><span data-w="42">Inglés</span></span><span><span data-w="18">22</span></span><span><span data-w="80">60 minutos</span></span>
              </div>
              <div class="self-end mt-[30px] w-[123px] h-[46px] bg-[#e6e8ea] flex items-center justify-center text-[17px] text-[#666]"><span data-w="87">Finalizada</span></div>
            </div>
          </section>
        </div>
        <footer class="mt-[66px] border-t border-dashed border-[#999] pt-[12px] flex flex-col items-center text-[13.5px]">
          <span data-w="951">En caso de requerir información sobre Evaluar para Avanzar 3º a 11º o soporte de la plataforma electrónica puede escribir al correo electrónico</span>
          <span data-w="1114">evaluarparaavanzar@icfes.gov.co o comunicarse vía telefónica desde Bogotá 3905666, desde su celular 031- 3905666, desde un número fijo nacional a la línea gratuita</span>
          <span data-w="106">018000-184427.</span>
        </footer>
        <div class="absolute right-0 top-[551px] w-[70px] h-[60px] bg-[#fafafa] rounded-l-[3px] shadow-[0_0_4px_#808080] flex flex-col items-center pt-[6px]">
          <svg class="w-[38px] h-[38px]" viewBox="0 0 38 38"><path d="M1 19C1 12 3 8 6 6L3 1H19V11Q13 12 12 19Z" fill="#4a90f0"/><path d="M19 1Q28 1 33 8L37 4V19H22L26 14Q23 11 19 11Z" fill="#1c3aa9"/><path d="M1 19L10 19Q11 28 19 28Q23 27 25 24L20 19 18 24 12 19H1V35L5 31Q10 38 19 38Q28 37 33 30L27 25Q19 33 12 26Z" fill="#b3b5b8"/></svg>
          <span class="mt-[1px] text-[6px] leading-[10px] text-[#222] font-['Roboto',sans-serif]" data-w="58">Privacidad - Condiciones</span>
        </div>
      </main>
      <div class="w-[17px] h-full bg-[#f1f1f1] flex flex-col items-center">
        <svg class="w-[17px] h-[17px] shrink-0" viewBox="0 0 17 17"><path d="M5 11L8.500 7 12 11Z" fill="#a0a0a0"/></svg>
        <div class="w-[13px] h-[558px] bg-[#c1c1c1]"></div>
        <svg class="mt-auto w-[17px] h-[17px] shrink-0" viewBox="0 0 17 17"><path d="M5 6L8.500 10 12 6Z" fill="#505050"/></svg>
      </div>
    </div>
    <!-- secondary taskbar -->
    <div class="h-[40px] shrink-0 flex items-center text-white bg-[linear-gradient(90deg,#1e1e1e_0%,#202020_28%,#3c3c3c_42%,#444_60%,#484848_78%,#262626_88%,#1c1c1c_100%)]">
      <div class="w-[48px] flex justify-center"><svg class="w-[24px] h-[24px]"><use href="#t-win"/></svg></div>
      <div class="w-[48px] flex justify-center"><svg class="w-[24px] h-[24px]"><use href="#t-search"/></svg></div>
      <div class="w-[51px] flex justify-center"><svg class="w-[24px] h-[24px]"><use href="#t-view"/></svg></div>
      <div id="bar2" class="flex h-full"></div>
      <svg class="ml-[27px] w-[20px] h-[20px]" viewBox="0 0 20 20"><circle cx="8" cy="7" r="6" fill="#ffc533"/><path d="M2 17a4.500 4.500 0 0 1 1-8 5.500 5.500 0 0 1 9-2 4.500 4.500 0 0 1 7 5 4 4 0 0 1-2 5Z" fill="#cfe0f5"/><path d="M8 11Q11 15 8 16Q5 15 8 11ZM13 13Q16 17 13 18Q10 17 13 13Z" fill="#2f8fe8"/></svg>
      <span class="ml-[11px] text-[13px]" data-w="29">29°C</span>
      <svg class="ml-[18px] w-[13px] h-[8px]" viewBox="0 0 13 8"><path d="M.5 7L6.500 1 12.500 7" fill="none" stroke="#fff" stroke-width="1.300"/></svg>
      <span class="ml-[14px] text-[11px]" data-w="18">ESP</span>
      <div class="ml-auto w-[58px] flex flex-col items-center text-[12px] leading-[18px]"><span data-w="51">5:10 p. m.</span><span data-w="57">14/09/2021</span></div>
      <svg class="ml-[19px] mr-[20px] w-[17px] h-[17px]" viewBox="0 0 17 17"><path d="M1 1.500H16V13H11.500L8.500 16 5.500 13H1Z" fill="none" stroke="#fff" stroke-width="1.200"/></svg>
      <div class="w-px h-full bg-[#6a6a6a] mr-[5px]"></div>
    </div>
  </section>
</div>

<script>
// column, row, icon, shortcut flag, [label, width] lines
const items = [
  [0,0,'bin',0,['Papelera de',77],['reciclaje',54]],[1,0,'robo',1,['Robo 3T 1.4.3',90]],[2,0,'folder',0,['APIRestNest',80]],[3,0,'rar',0,['COLMENITA-1...',102]],[4,0,'navicat',1,['Navicat Premium',112],['15',14]],
  [0,1,'cheat',1,['Cheat Engine',85]],[1,1,'worddoc',0,['Proyecto',58],['pensamient...',85]],[2,1,'folder',0,['fotos izako',72]],[3,1,'txt',0,['rutas importantes',115]],[4,1,'rar',0,['auth_system-m...',107]],
  [0,2,'chrome',1,['Google Chrome',104]],[1,2,'folder',0,['PulpoSoft',65]],[2,2,'rockstar',1,['Rockstar Games',104],['Launcher',58]],[3,2,'asham',0,['ashampoo_wino...',116]],
  [0,3,'obs',1,['OBS Studio',74]],[1,3,'folder',0,['Pruebas next',84]],[2,3,'chromea',1,['YUM (Alexis) -',93],['Chrome',51]],[3,3,'rar',0,['INFORME-IVA-...',105]],
  [0,4,'sai',1,['Sai Open 9.0.4',93]],[1,4,'anfla',0,['surtiprecios',76]],[2,4,'anfla',0,['surtiprecios2',84]],[3,4,'utor',1,['µTorrent',56]],
  [0,5,'folder',0,['Alex',29]],[1,5,'java',1,['ApacheJMeter',94]],[2,5,'folder',0,['INFORME-IVA-...',105]],[3,5,'folder',0,['proyect',50]],[5,5,'folder',0,['copias_proyecto',107]],
  [0,6,'folder',0,['Jeffer',36]],[1,6,'blank',0,['FT',14]],[2,6,'avast',1,['Avast Free',67],['Antivirus',56]],[3,6,'folder',0,['demoReact',75]],
  [12,3,'folder',0,['IMPORTANTS',88]]
];
document.getElementById('desktop').innerHTML = items.map(([c,r,ic,s,...ls]) =>
  `<div class="absolute w-[120px] flex flex-col items-center" style="left:${c*121}px;top:${7+r*146}px">
    <div class="relative w-[60px] h-[60px] mb-[3px]"><svg class="w-[60px] h-[60px]"><use href="#${ic}"/></svg>${s?'<svg class="absolute inset-0 w-[60px] h-[60px]"><use href="#arrow"/></svg>':''}</div>
    ${ls.map(([t,w])=>`<span data-w="${w}">${t}</span>`).join('')}
  </div>`).join('');

// icon, state: 0 closed, 1 open, 2 several windows
const apps = [['t-ai',0],['chrome',0],['t-ps',0],['t-xd',0],['t-an',0],['t-mail',0],['chromea',1],['t-exp',1],['sai',0],['t-word',2],['t-store',0],['t-fox',0],['t-red',0],['t-opera',0],['t-note',2],['t-music',1],['t-photo',1],['t-film',1],['t-mov',1],['t-blue',1]];
document.getElementById('bar1').innerHTML = apps.map(([i,s]) =>
  `<div class="w-[62px] h-full flex flex-col items-center justify-between pt-[10px]"><svg class="w-[30px] h-[30px]"><use href="#${i}"/></svg>${s?`<div class="w-[51px] h-[3px] bg-[#e59bea] flex justify-end">${s>1?'<div class="w-[11px] h-full bg-[#b478ba]"></div>':''}</div>`:''}</div>`).join('');
document.getElementById('bar2').innerHTML = apps.map(([i,s]) =>
  `<div class="w-[46.55px] h-full flex flex-col items-center justify-between pt-[8px]"><svg class="w-[24px] h-[24px]"><use href="#${i}"/></svg>${s?`<div class="w-[37px] h-[2px] bg-[#e59bea] flex justify-end">${s>1?'<div class="w-[8px] h-full bg-[#b478ba]"></div>':''}</div>`:''}</div>`).join('');

// adjust tracking so each label takes its set width
function fit() {
  const all = [...document.querySelectorAll('[data-w]')];
  all.forEach(e => {
    e.style.whiteSpace = 'nowrap';
    if (!e.classList.contains('absolute')) e.style.display = 'inline-block';
    e.style.flexShrink = 0;
    e.style.letterSpacing = '0px';
  });
  const widths = all.map(e => {
    const r = document.createRange();
    r.selectNodeContents(e);
    return e.classList.contains('absolute') ? e.offsetWidth : r.getBoundingClientRect().width;
  });
  all.forEach((e, i) => {
    e.style.letterSpacing = ((+e.dataset.w - widths[i]) / e.textContent.length).toFixed(3) + 'px';
  });
}
fit();
addEventListener('load', () => { fit(); requestAnimationFrame(fit); setTimeout(fit, 60); });
document.fonts.ready.then(fit);
</script>
</body>
</html>
